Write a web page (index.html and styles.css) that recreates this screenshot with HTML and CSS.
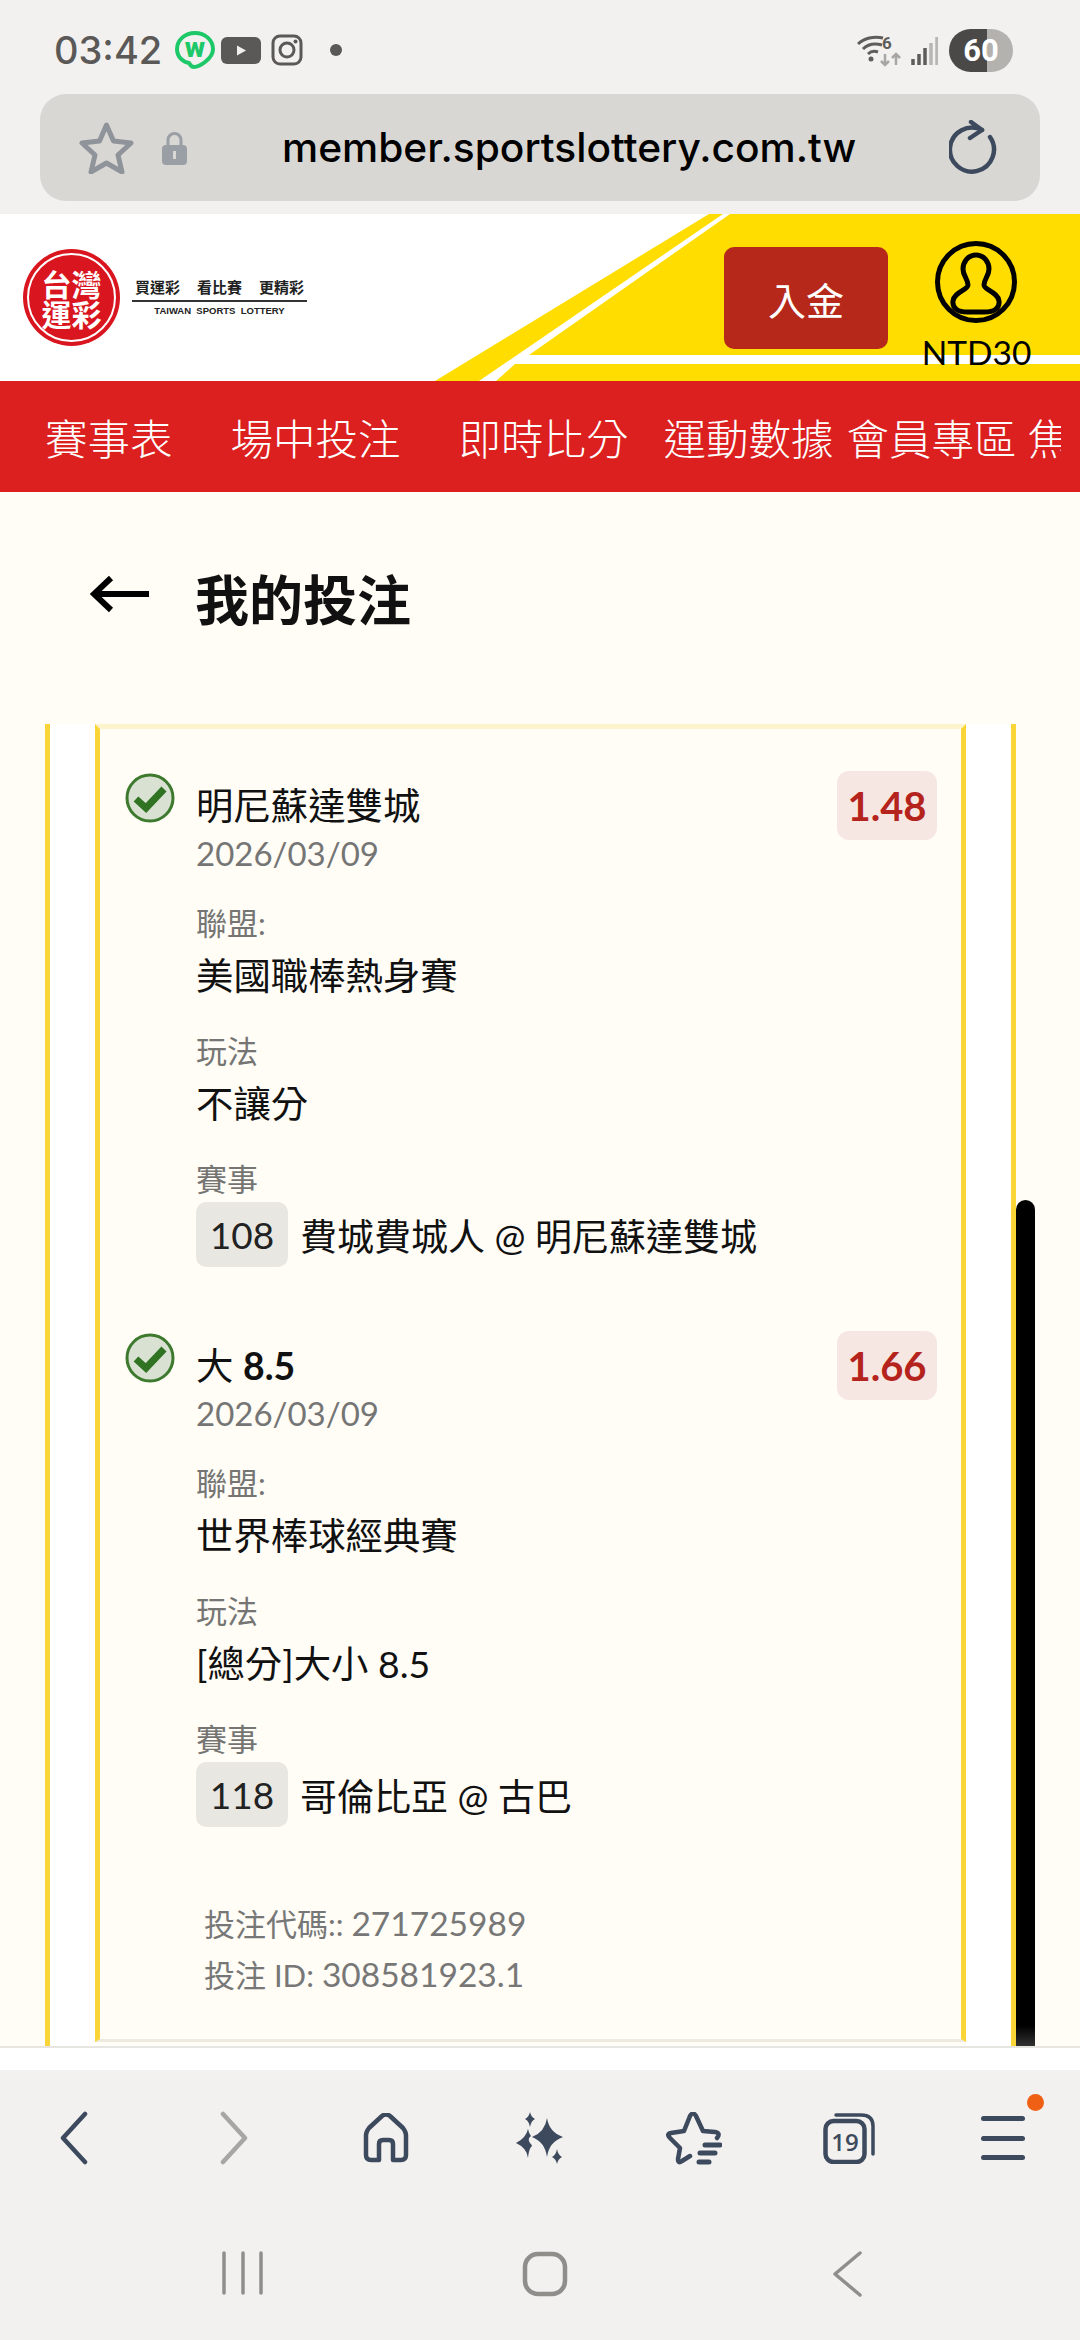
FILE: index.html
```html
<!DOCTYPE html>
<html lang="zh-Hant">
<head>
<meta charset="utf-8">
<title>我的投注</title>
<link rel="stylesheet" href="styles.css">
</head>
<body>
<div class="phone">
  <div class="statusbar">
    <span class="time">03:42</span>
    <svg class="ic-webtoon" width="40" height="38" viewBox="0 0 40 38"><path d="M20 2C10 2 2 9 2 18C2 26 8 31 14 32C15 33 16 36 19 36C24 36 38 28 38 18C38 9 30 2 20 2Z" fill="none" stroke="#1dc869" stroke-width="4"/><text x="20" y="26" text-anchor="middle" class="wt">w</text></svg>
    <svg class="ic-yt" width="40" height="27" viewBox="0 0 40 27"><rect width="40" height="27" rx="6" fill="#5b5957"/><path d="M16 8.500l9 5-9 5Z" fill="#f3f1ef"/></svg>
    <svg class="ic-ig" width="32" height="32" viewBox="0 0 32 32"><rect x="2" y="2" width="28" height="28" rx="7" fill="none" stroke="#5b5957" stroke-width="3"/><circle cx="16" cy="16" r="7" fill="none" stroke="#5b5957" stroke-width="3"/><circle cx="24.500" cy="7.500" r="2" fill="#5b5957"/></svg>
    <span class="dot"></span>
    <svg class="ic-wifi" width="46" height="34" viewBox="0 0 46 34"><g fill="none" stroke="#5f5d5b" stroke-width="3"><path d="M1 11C7 5 17 3 26 5"/><path d="M6 16C11 11 18 10 25 12"/><path d="M11 21C14 18 18 18 21 19"/></g><circle cx="14" cy="26" r="2.500" fill="#5f5d5b"/><text x="25" y="16" class="wf">6</text><path d="M28 21v11m-4-4l4 4 4-4" fill="none" stroke="#a8a6a4" stroke-width="2.500"/><path d="M39 32V21m-4 4l4-4 4 4" fill="none" stroke="#a8a6a4" stroke-width="2.500"/></svg>
    <svg class="ic-signal" width="28" height="29" viewBox="0 0 28 29"><path d="M3 23v6M9 18v11M15 12v17" stroke="#5f5d5b" stroke-width="3.500"/><path d="M21 7v22M27 1v28" stroke="#b8b6b3" stroke-width="3.500"/></svg>
    <div class="battery"><span class="bat-text">60</span></div>
  </div>

  <div class="addrbar">
    <svg class="ic-star" width="55" height="52" viewBox="0 0 55 52"><path d="M27.500 3l7 16 17.500 2-13 12 4 17-15.500-9-15.500 9 4-17-13-12 17.500-2Z" fill="none" stroke="#8f939a" stroke-width="5" stroke-linejoin="round"/></svg>
    <svg class="ic-lock" width="25" height="34" viewBox="0 0 25 34"><path d="M6 16V9a6.500 6.500 0 0 1 13 0v7" fill="none" stroke="#9a9ea5" stroke-width="3"/><rect y="14" width="25" height="20" rx="4" fill="#9a9ea5"/><rect x="11" y="20" width="3" height="8" fill="#d9d7d4"/></svg>
    <span class="url">member.sportslottery.com.tw</span>
    <svg class="ic-reload" width="48" height="56" viewBox="0 0 48 56"><path d="M33 10A22 22 0 1 0 41 17" fill="none" stroke="#3d4a5e" stroke-width="4.500" stroke-linecap="round"/><path d="M22 2L33 10L21 18" fill="none" stroke="#3d4a5e" stroke-width="4.500" stroke-linejoin="round" stroke-linecap="round"/></svg>
  </div>

  <div class="page">
    <header class="site-head">
      <svg class="head-art" width="1080" height="167" viewBox="0 0 1080 167"><path d="M730 0H1080V141H529Z" fill="#ffdd00"/><path d="M515 150H1080V167H496Z" fill="#ffdd00"/><path d="M709 0H723L479 167H435Z" fill="#ffdd00"/></svg>
      <div class="logo">
        <div class="logo-mark"><div class="logo-ring"><span>台</span><span>灣</span><span>運</span><span>彩</span></div></div>
        <div class="logo-copy">
          <div class="logo-zh"><span>買運彩</span><span>看比賽</span><span>更精彩</span></div>
          <div class="logo-en">TAIWAN&nbsp; SPORTS&nbsp; LOTTERY</div>
        </div>
      </div>
      <div class="head-actions">
        <button class="deposit">入金</button>
        <div class="account">
          <svg width="82" height="82" viewBox="0 0 82 82"><circle cx="41" cy="41" r="38.500" fill="none" stroke="#000" stroke-width="5"/><path d="M41 14C33 14 28 21 28 28C28 35 33 38 33 44C33 49 19 51 18 60C17 68 24 71 32 71L50 71C58 71 65 68 64 60C63 51 49 49 49 44C49 38 54 35 54 28C54 21 49 14 41 14Z" fill="none" stroke="#000" stroke-width="5"/></svg>
          <span class="balance">NTD30</span>
        </div>
      </div>
    </header>

    <nav class="mainnav">
      <span class="nav-item wide">賽事表</span>
      <span class="nav-item wide">場中投注</span>
      <span class="nav-item mid">即時比分</span>
      <span class="nav-item">運動數據</span>
      <span class="nav-item tight">會員專區</span>
      <span class="nav-item cut">焦</span>
    </nav>

    <main class="content">
      <div class="title-row">
        <svg class="back-arrow" width="60" height="40" viewBox="0 0 60 40"><path d="M59 20H4M21 4L4 20l17 16" fill="none" stroke="#000" stroke-width="6"/></svg>
        <h1 class="page-title">我的投注</h1>
      </div>

      <div class="frame">
        <div class="ticket">
          <section class="bet">
            <svg class="check" width="50" height="50" viewBox="0 0 50 50"><circle cx="25" cy="25" r="23" fill="#d8e1d2" stroke="#3d7a2e" stroke-width="3"/><path d="M11 26l10 9 18-19" fill="none" stroke="#2f7323" stroke-width="7"/></svg>
            <div class="bet-main">
              <div class="bet-name">明尼蘇達雙城</div>
              <div class="bet-date">2026/03/09</div>
              <div class="label first">聯盟:</div>
              <div class="value">美國職棒熱身賽</div>
              <div class="label">玩法</div>
              <div class="value">不讓分</div>
              <div class="label">賽事</div>
              <div class="match"><span class="match-no">108</span><span class="match-name">費城費城人 @ 明尼蘇達雙城</span></div>
            </div>
            <span class="odds">1.48</span>
          </section>

          <section class="bet second">
            <svg class="check" width="50" height="50" viewBox="0 0 50 50"><circle cx="25" cy="25" r="23" fill="#d8e1d2" stroke="#3d7a2e" stroke-width="3"/><path d="M11 26l10 9 18-19" fill="none" stroke="#2f7323" stroke-width="7"/></svg>
            <div class="bet-main">
              <div class="bet-name">大 <b>8.5</b></div>
              <div class="bet-date">2026/03/09</div>
              <div class="label first">聯盟:</div>
              <div class="value">世界棒球經典賽</div>
              <div class="label">玩法</div>
              <div class="value">[總分]大小 8.5</div>
              <div class="label">賽事</div>
              <div class="match"><span class="match-no">118</span><span class="match-name">哥倫比亞 @ 古巴</span></div>
            </div>
            <span class="odds">1.66</span>
          </section>

          <div class="ticket-foot">
            <div>投注代碼:: <span class="num">271725989</span></div>
            <div>投注 ID: <span class="num">308581923.1</span></div>
          </div>
        </div>
      </div>
      <div class="scrollthumb"></div>
    </main>
  </div>

  <div class="fade-strip"></div>

  <div class="toolbar">
    <svg class="tb-back" width="30" height="54" viewBox="0 0 30 54"><path d="M26 3L4 27l22 24" fill="none" stroke="#3d4a5e" stroke-width="4.500" stroke-linecap="round" stroke-linejoin="round"/></svg>
    <svg class="tb-fwd" width="30" height="54" viewBox="0 0 30 54"><path d="M4 3l22 24L4 51" fill="none" stroke="#a6a6a6" stroke-width="4.500" stroke-linecap="round" stroke-linejoin="round"/></svg>
    <svg width="46" height="50" viewBox="0 0 46 50"><path d="M16 47H8Q3 47 3 42V22Q3 19 6 15L19 3Q23 0 27 3L40 15Q43 19 43 22V42Q43 47 38 47H30V31Q30 27 26 27H20Q16 27 16 31Z" fill="none" stroke="#3d4a5e" stroke-width="4.500" stroke-linejoin="round"/></svg>
    <svg width="48" height="52" viewBox="0 0 48 52"><g fill="#3d4a5e"><path d="M31 6Q33 20 47 25Q33 30 31 45Q29 30 16 25Q29 20 31 6Z"/><path d="M14 0Q15 5 19 7Q15 9 14 15Q13 9 9 7Q13 5 14 0Z"/><path d="M41 37Q42 43 46 45Q42 47 41 52Q40 47 36 45Q40 43 41 37Z"/><path d="M12 17Q13 22 15 24Q11 27 14 31Q16 33 16 34Q13 36 12 46Q11 36 0 31Q10 26 12 17Z"/></g></svg>
    <svg width="56" height="53" viewBox="0 0 56 53"><path d="M51 26Q55 21 49 20L37 19L30 4Q27 -1 24 4L18 19L5 21Q0 22 4 26L14 36L12 47Q12 52 16 49L24 44" fill="none" stroke="#3d4a5e" stroke-width="4.500" stroke-linecap="round" stroke-linejoin="round"/><path d="M39 33H54M34 41H49M33 50H43" stroke="#3d4a5e" stroke-width="5" stroke-linecap="round"/></svg>
    <svg width="52" height="52" viewBox="0 0 52 52"><rect x="2.500" y="9" width="39" height="41" rx="8" fill="none" stroke="#3d4a5e" stroke-width="4.500"/><path d="M13 3H38Q50 3 50 14V42" fill="none" stroke="#3d4a5e" stroke-width="3.500" stroke-linecap="round"/><text x="22" y="39" text-anchor="middle" class="tabnum">19</text></svg>
    <div class="menu-btn"><span></span><span></span><span></span><i class="menu-dot"></i></div>
  </div>

  <div class="sysnav">
    <svg width="42" height="44" viewBox="0 0 42 44"><path d="M2 2V42M21 2V42M39 2V42" stroke="#8f8e8b" stroke-width="3.500" stroke-linecap="round"/></svg>
    <svg width="46" height="46" viewBox="0 0 46 46"><rect x="3" y="3" width="40" height="40" rx="13" fill="none" stroke="#8f8e8b" stroke-width="4.500"/></svg>
    <svg width="30" height="46" viewBox="0 0 30 46"><path d="M28 2L3 23l25 21" fill="none" stroke="#8f8e8b" stroke-width="3.500" stroke-linecap="round" stroke-linejoin="round"/></svg>
  </div>
</div>
</body>
</html>
```

FILE: styles.css
```css
* { box-sizing: border-box; }
html, body { margin: 0; padding: 0; }
body { width: 1080px; height: 2340px; overflow: hidden; font-family: Lato, "Noto Sans CJK TC", sans-serif; background: #f3f1ef; }
.phone { width: 1080px; height: 2340px; display: flex; flex-direction: column; background: #f3f1ef; }

/* status bar */
.statusbar { height: 94px; flex: none; display: flex; align-items: center; padding: 6px 67px 0 54px; }
.time { font-family: Inter, sans-serif; font-size: 38px; font-weight: 500; color: #5b5957; width: 121px; }
.wt { font-family: Roboto, sans-serif; font-size: 28px; font-weight: 900; fill: #1dc869; }
.wf { font-family: Roboto, sans-serif; font-size: 17px; font-weight: 700; fill: #5f5d5b; }
.ic-yt { margin-left: 6px; }
.ic-ig { margin-left: 10px; }
.dot { width: 12px; height: 12px; border-radius: 50%; background: #5b5957; margin-left: 27px; }
.ic-wifi { margin-left: auto; }
.ic-signal { margin-left: 7px; }
.battery { width: 64px; height: 43px; margin-left: 11px; border-radius: 22px; background: linear-gradient(90deg, #4a4947 59%, #b4b2af 59%); display: flex; align-items: center; justify-content: center; }
.bat-text { font-family: Roboto, sans-serif; font-size: 31px; font-weight: 700; color: #fff; }

/* address bar */
.addrbar { height: 107px; flex: none; margin: 0 40px 13px; border-radius: 26px; background: #d9d7d4; display: flex; align-items: center; padding: 0 43px 0 39px; }
.ic-lock { margin-left: 28px; }
.url { margin-left: 95px; font-family: Inter, sans-serif; font-size: 40.700px; font-weight: 500; color: #000; white-space: nowrap; }
.ic-reload { margin-left: auto; }

/* page */
.page { height: 1834px; flex: none; display: flex; flex-direction: column; overflow: hidden; background: #fffdf6; border-bottom: 2px solid #e6e5e0; }
.site-head { position: relative; height: 167px; flex: none; background: #fff; display: flex; align-items: flex-start; justify-content: space-between; }
.head-art { position: absolute; left: 0; top: 0; }
.logo { position: relative; display: flex; align-items: center; padding: 35px 0 0 23px; }
.logo-mark { width: 97px; height: 97px; border-radius: 50%; background: #d9161f; padding: 4px; }
.logo-ring { width: 89px; height: 89px; border-radius: 50%; border: 2px solid #fff; display: grid; grid-template-columns: 30px 30px; grid-auto-rows: 30px; align-content: center; justify-content: center; color: #fff; font-size: 30px; font-weight: 700; line-height: 30px; text-align: center; font-family: "Noto Sans CJK TC", sans-serif; }
.logo-copy { width: 175px; margin-left: 12px; }
.logo-zh { display: flex; justify-content: space-between; padding: 0 3px 3px; border-bottom: 2px solid #333; font-size: 15px; line-height: 20px; font-weight: 700; color: #222; font-family: "Noto Sans CJK TC", sans-serif; }
.logo-en { text-align: center; font-family: "Liberation Sans", sans-serif; font-size: 9.500px; font-weight: 700; line-height: 17px; color: #222; white-space: nowrap; }
.head-actions { position: relative; display: flex; align-items: flex-start; padding: 27px 63px 0 0; }
.deposit { width: 164px; height: 102px; margin: 6px 47px 0 0; border: 0; border-radius: 10px; background: #b5281a; color: #fff; font-family: "Noto Sans CJK TC", sans-serif; font-size: 38px; padding: 0; }
.account { width: 82px; display: flex; flex-direction: column; align-items: center; }
.balance { font-family: Lato, sans-serif; font-size: 33.500px; line-height: 40px; color: #000; white-space: nowrap; margin: 9px 0 0 1px; }

.mainnav { height: 111px; flex: none; background: #dc1f1f; display: flex; align-items: center; padding-left: 45px; overflow: hidden; color: #fff; }
.nav-item { flex: none; margin-right: 13px; font-family: "Noto Sans CJK TC", sans-serif; font-size: 42.500px; font-weight: 300; white-space: nowrap; }
.nav-item.wide { margin-right: 58px; }
.nav-item.mid { margin-right: 35px; }
.nav-item.tight { margin-right: 11px; }
.nav-item.cut { width: 33px; margin-right: 0; overflow: hidden; }

.content { position: relative; flex: 1; min-height: 0; overflow: hidden; padding-left: 45px; }
.title-row { height: 232px; display: flex; align-items: center; padding: 0 0 22px 45px; gap: 45px; }
.back-arrow { flex: none; margin-top: -6px; }
.page-title { margin: 0; font-family: "Noto Sans CJK TC", sans-serif; font-size: 54px; font-weight: 700; color: #111; }
.frame { width: 971px; padding: 0 45px; background: #fff; border-left: 5px solid #f9d537; border-right: 5px solid #f9d537; height: 1400px; }
.ticket { height: 1318px; background: #fffdf6; border-left: 5px solid #f9d537; border-right: 5px solid #f9d537; border-top: 5px solid #fdf3cc; border-bottom: 3px solid #eeeae0; padding-top: 54px; box-shadow: 0 3px 0 #fffdf6; }
.bet { display: flex; align-items: flex-start; padding: 0 24px 0 25px; }
.bet.second { margin-top: 76px; }
.check { flex: none; margin: -10px 21px 0 0; }
.bet-main { flex: 1; min-width: 0; }
.bet-name { font-size: 37.400px; line-height: 46px; color: #111; }
.bet-name b { font-weight: 700; }
.bet-date { font-size: 33px; line-height: 48px; color: #757575; }
.label { font-size: 31px; line-height: 46px; color: #757573; margin-top: 22px; }
.value { font-size: 37.400px; line-height: 60px; color: #111; }
.label.first { margin-top: 23px; }
.match { display: flex; align-items: center; }
.match-no { width: 92px; height: 65px; border-radius: 10px; background: #e8e7e2; display: flex; align-items: center; justify-content: center; font-size: 37px; color: #222; }
.match-name { margin-left: 12px; font-size: 37px; color: #111; }
.odds { flex: none; width: 100px; height: 69px; margin-top: -12px; border-radius: 12px; background: #f6e7e2; display: flex; align-items: center; justify-content: center; font-size: 40px; font-weight: 700; color: #b5241c; }
.ticket-foot { margin: 71px 0 0 104px; font-size: 31px; line-height: 50px; color: #777; }
.ticket-foot .num { font-size: 33.500px; }
.scrollthumb { position: absolute; left: 1016px; top: 708px; width: 19px; height: 860px; border-radius: 10px 10px 0 0; background: linear-gradient(180deg, #000 96%, #555 100%); }

.fade-strip { height: 22px; flex: none; background: #fff; }
.toolbar { height: 136px; flex: none; display: grid; grid-template-columns: repeat(7, 154.300px); justify-items: center; align-items: center; position: relative; }
.tb-back { margin-right: 6px; }
.tb-fwd { margin-left: 6px; }
.menu-btn { position: relative; width: 44px; height: 44px; display: flex; flex-direction: column; justify-content: space-between; }
.menu-btn span { display: block; height: 5px; border-radius: 3px; background: #3d4a5e; }
.menu-dot { position: absolute; left: 46px; top: -22px; width: 17px; height: 17px; border-radius: 50%; background: #ef5f14; }
.tabnum { font-family: "Open Sans", sans-serif; font-size: 24px; fill: #3d4a5e; font-weight: 600; }
.sysnav { flex: 1; display: flex; align-items: flex-start; padding: 45px 0 0 222px; }
.sysnav svg:nth-child(2) { margin-left: 258px; }
.sysnav svg:nth-child(3) { margin-left: 264px; }
```
